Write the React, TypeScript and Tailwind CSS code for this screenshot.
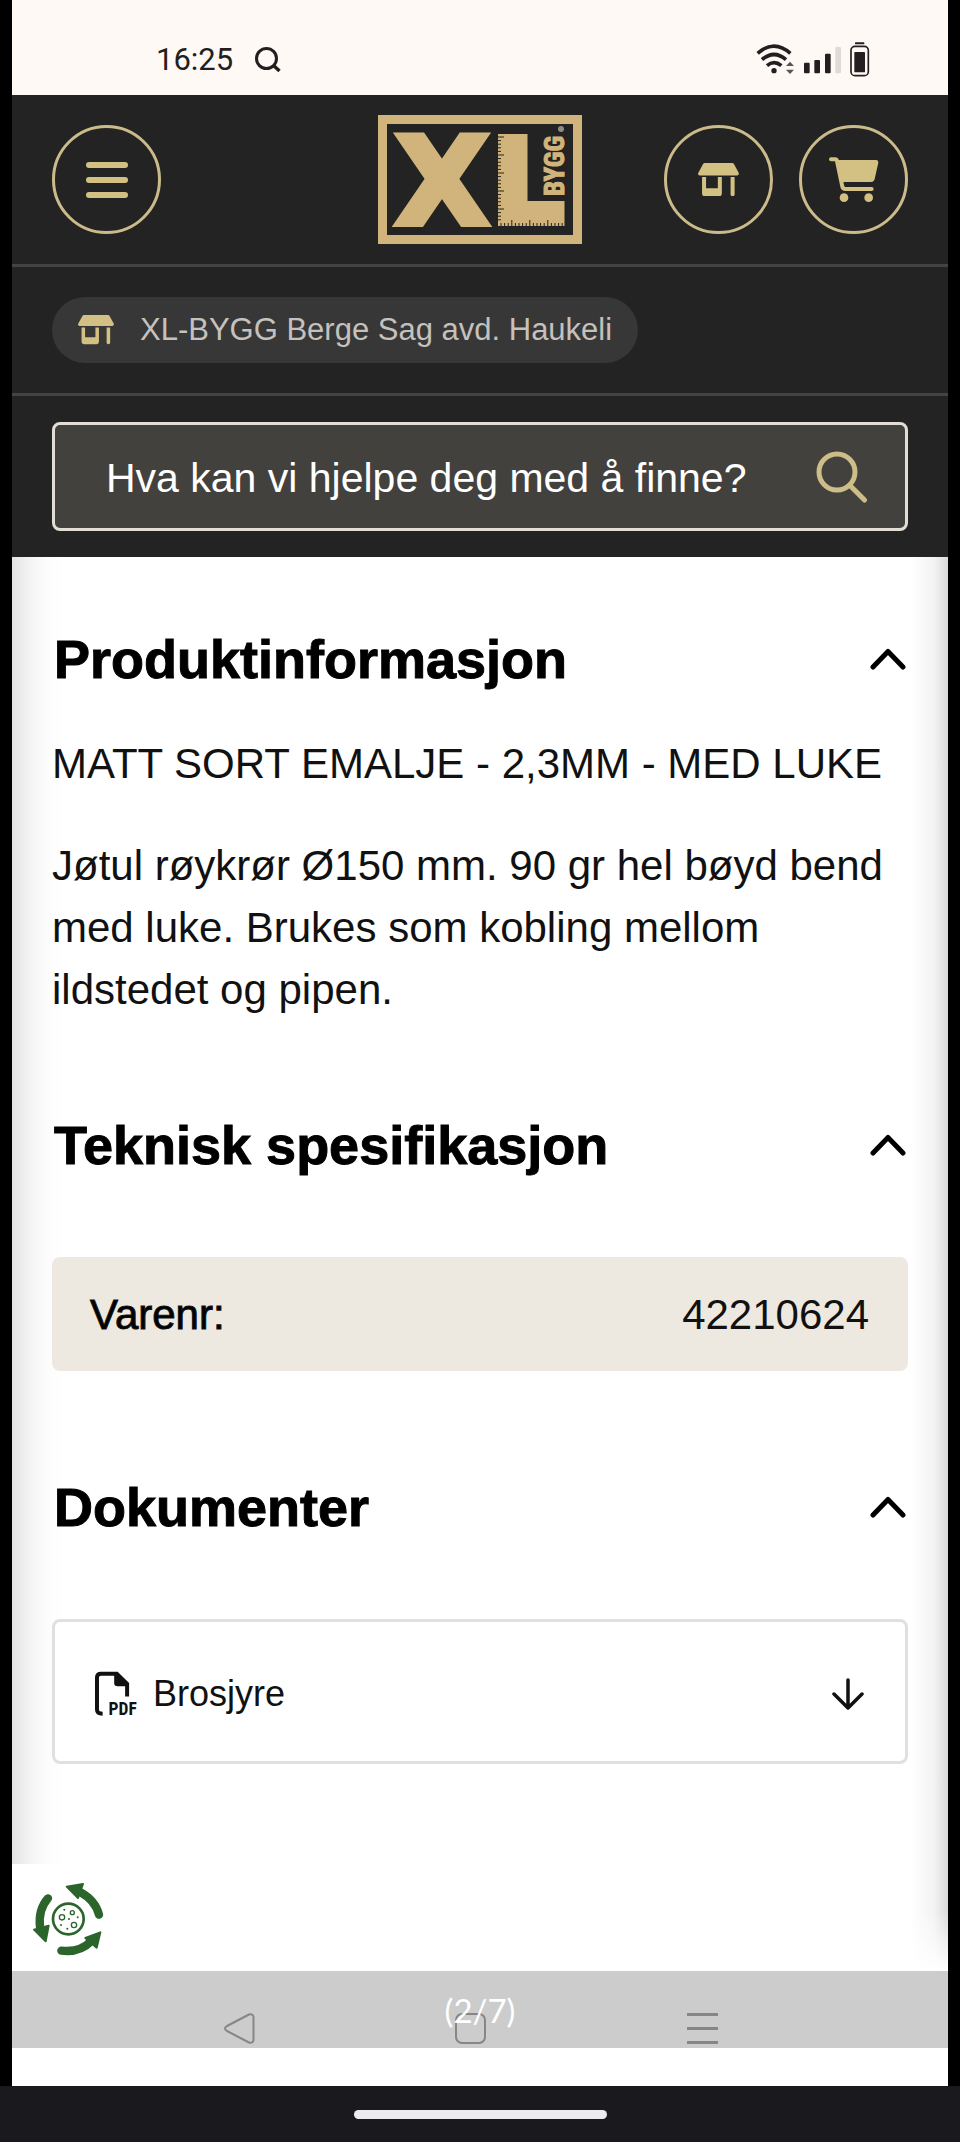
import { useState, type ReactNode } from "react";

function StoreIcon({ className }: { className: string }) {
  return (
    <svg viewBox="0 0 122 100" className={className} fill="currentColor" aria-hidden="true">
      <path d="M20 0H102Q105 0 107 3L121 29Q123 37 116 37H5Q-2 37 1 29L15 3Q17 0 20 0Z" />
      <path d="M12 42H24V75H59V42H71V91Q71 99 63 99H20Q12 99 12 91Z" />
      <path d="M97 42H109V93Q109 99 103 99T97 93Z" />
    </svg>
  );
}

function CartIcon() {
  return (
    <svg viewBox="0 0 150 136" className="w-[50px]" fill="currentColor" aria-hidden="true">
      <path
        d="M6 7H18Q23 7 24 12L40 89Q42 96 49 96H128"
        fill="none"
        stroke="currentColor"
        strokeWidth="12"
        strokeLinecap="round"
        strokeLinejoin="round"
      />
      <path d="M24 9H142Q149 10 148 17L137 66Q135 75 126 75H40Z" />
      <circle cx="45" cy="122" r="13" />
      <circle cx="119" cy="122" r="13" />
    </svg>
  );
}

function Logo() {
  const ticks = Array.from({ length: 24 }, (_, i) => i);
  return (
    <svg viewBox="0 0 204 129" className="w-[204px] overflow-visible text-[#d0b47b]" role="img" aria-label="XL-BYGG">
      <rect x="4.5" y="4.5" width="195" height="120" fill="none" stroke="currentColor" strokeWidth="9" />
      <text
        x="17"
        y="108.500"
        fontFamily="'DejaVu Sans'"
        fontWeight="700"
        fontSize="122"
        fill="currentColor"
        stroke="currentColor"
        strokeWidth="6"
      >
        X
      </text>
      <path d="M120 19H149.500V86H186.500V111H120Z" fill="currentColor" />
      <g stroke="#232323" strokeWidth="1">
        {ticks.map((i) => (
          <path key={i} d={`M119 ${22 + i * 3.6}h${i % 5 === 0 ? 7 : 4}`} />
        ))}
        {ticks.slice(0, 18).map((i) => (
          <path key={i} d={`M${123 + i * 3.6} 112v${i % 5 === 3 ? -7 : -4}`} />
        ))}
      </g>
      <text
        transform="translate(186 81) rotate(-90)"
        fontFamily="'Liberation Sans Narrow', 'Roboto Condensed', 'DejaVu Sans Condensed', sans-serif"
        fontWeight="700"
        fontSize="27"
        fill="currentColor"
        stroke="currentColor"
        strokeWidth="1"
      >
        BYGG
      </text>
      <circle cx="183" cy="14" r="3" fill="#8f8b86" />
    </svg>
  );
}

function PdfIcon() {
  return (
    <svg viewBox="28 26 136 138" className="w-[45px] overflow-visible" aria-hidden="true">
      <path
        d="M51 155Q34 155 34 143V46Q34 34 46 34H94L125 65V103"
        fill="none"
        stroke="currentColor"
        strokeWidth="12"
      />
      <path d="M86 32H96L129 64V72H96Q86 72 86 62Z" fill="currentColor" />
      <text
        x="69"
        y="160"
        fontFamily="'Liberation Sans Narrow', 'Roboto Condensed', sans-serif"
        fontWeight="700"
        fontSize="53"
        fill="currentColor"
      >
        PDF
      </text>
    </svg>
  );
}

function CookieIcon() {
  return (
    <svg viewBox="94 122 216 228" className="w-[72px]" fill="#2b652c" aria-hidden="true">
      <g fill="none" stroke="#2b652c" strokeWidth="25" strokeLinecap="round">
        <path d="M295 223Q284 180 240 156" />
        <path d="M142 174Q112 208 118 260" />
        <path d="M182 331Q238 338 274 300" />
      </g>
      <g stroke="#2b652c" strokeWidth="6" strokeLinejoin="round">
        <path d="M198 139L247 131L232 173Z" />
        <path d="M100 268L144 256L135 303Z" />
        <path d="M299 276L254 293L288 322Z" />
      </g>
      <circle cx="203" cy="236" r="46" fill="#fff" stroke="#2b652c" strokeWidth="8" />
      <g fill="none" stroke="#2b652c" strokeWidth="4">
        <circle cx="184" cy="231" r="8" />
        <circle cx="215" cy="217" r="6" />
        <circle cx="220" cy="254" r="8" />
      </g>
      <circle cx="191" cy="208" r="3" />
      <circle cx="231" cy="231" r="3" />
      <circle cx="205" cy="236" r="3" />
      <circle cx="181" cy="254" r="3" />
      <circle cx="200" cy="265" r="3" />
    </svg>
  );
}

function StatusBar() {
  return (
    <div className="flex h-[95px] items-center justify-between bg-[#fef9f5] pt-6 pr-[78px] pl-36 text-[#231f20]">
      <div className="flex items-center gap-[22px]">
        <span className="font-[Roboto] text-[31px] leading-none">16:25</span>
        <svg viewBox="0 0 26 26" className="w-[26px]" fill="none" stroke="currentColor" strokeWidth="3" aria-hidden="true">
          <circle cx="11.500" cy="11.500" r="10" />
          <path d="M18 18L24.500 24" strokeWidth="3.500" />
        </svg>
      </div>
      <svg viewBox="830 125 342 106" className="w-[114px]" fill="currentColor" aria-hidden="true">
        <g fill="none" stroke="currentColor" strokeWidth="11">
          <path d="M835 159Q884 116 933 159" />
          <path d="M848 178Q884 147 920 178" />
          <path d="M863 196Q884 178 906 196" />
        </g>
        <circle cx="884" cy="211" r="8" />
        <path d="M920 197L932 184L944 197ZM920 208L932 221L944 208Z" fill="#555" />
        <rect x="974" y="187" width="17" height="32" rx="3" />
        <rect x="1005" y="179" width="17" height="40" rx="3" />
        <rect x="1037" y="160" width="17" height="59" rx="3" />
        <rect x="1068" y="140" width="17" height="79" rx="3" fill="#dedad7" />
        <rect x="1115" y="138" width="52" height="88" rx="12" fill="none" stroke="currentColor" strokeWidth="5" />
        <rect x="1125" y="155" width="32" height="61" rx="2" />
        <rect x="1127" y="126" width="28" height="6" rx="2" />
      </svg>
    </div>
  );
}

const roundButton =
  "flex size-[109px] items-center justify-center rounded-full border-3 border-[#cbbb8a] text-[#d3c083]";

function Header() {
  return (
    <header className="bg-[#232323]">
      <div className="grid grid-cols-[1fr_auto_1fr] items-center border-b-3 border-[#434343] px-10 py-5">
        <button type="button" aria-label="Meny" className={roundButton}>
          <svg viewBox="0 0 42 36" className="w-[42px]" fill="currentColor" aria-hidden="true">
            <rect width="42" height="6" rx="3" />
            <rect y="15" width="42" height="6" rx="3" />
            <rect y="30" width="42" height="6" rx="3" />
          </svg>
        </button>
        <a href="#" aria-label="XL-BYGG">
          <Logo />
        </a>
        <div className="flex justify-end gap-[26px]">
          <button type="button" aria-label="Butikk" className={roundButton}>
            <StoreIcon className="w-[41px]" />
          </button>
          <button type="button" aria-label="Handlekurv" className={roundButton}>
            <CartIcon />
          </button>
        </div>
      </div>

      <div className="flex border-b-3 border-[#434343] px-10 py-[30px]">
        <a
          href="#"
          className="flex h-[66px] items-center gap-[26px] rounded-full bg-[#373737] px-[26px] text-[31px] text-[#c5c1bd]"
        >
          <StoreIcon className="w-[36px] text-[#d3c083]" />
          XL-BYGG Berge Sag avd. Haukeli
        </a>
      </div>

      <form role="search" onSubmit={(e) => e.preventDefault()} className="px-10 py-[26px]">
        <div className="flex h-[109px] items-center rounded-lg border-3 border-[#e2ddd5] bg-[#43413e] pl-[51px]">
          <input
            type="text"
            aria-label="Søk"
            placeholder="Hva kan vi hjelpe deg med å finne?"
            className="h-full min-w-0 flex-1 bg-transparent pt-1 text-[41px] text-white outline-none placeholder:text-white"
          />
          <button type="submit" aria-label="Søk" className="ml-7 flex w-[126px] justify-center text-[#cdbd88]">
            <svg viewBox="0 0 52 52" className="w-[52px]" fill="none" stroke="currentColor" strokeWidth="5" strokeLinecap="round" aria-hidden="true">
              <circle cx="21" cy="21" r="18" />
              <path d="M34 34.500L48.500 49" />
            </svg>
          </button>
        </div>
      </form>
    </header>
  );
}

function Section({ title, gap, children }: { title: string; gap: string; children: ReactNode }) {
  const [open, setOpen] = useState(true);
  return (
    <section>
      <h2>
        <button
          type="button"
          aria-expanded={open}
          onClick={() => setOpen(!open)}
          className="flex w-full items-center justify-between px-[2px] text-[54px] leading-[64px] font-bold [-webkit-text-stroke:1px_#000]"
        >
          {title}
          <svg viewBox="0 0 36 22" className="w-[36px]" fill="none" stroke="currentColor" strokeWidth="5" strokeLinecap="round" strokeLinejoin="round" aria-hidden="true">
            <path d="M3 19L18 3.500L33 19" />
          </svg>
        </button>
      </h2>
      {open && <div className={gap}>{children}</div>}
    </section>
  );
}

function NavBar() {
  return (
    <nav className="relative bg-[#cccccc] pt-[42px] pr-[130px] pb-1 pl-[112px] text-[#868686]">
      <div className="grid grid-cols-3 justify-items-center">
        <button type="button" aria-label="Tilbake">
          <svg viewBox="0 0 31 31" className="w-[31px]" fill="none" stroke="currentColor" strokeWidth="2" strokeLinejoin="round" aria-hidden="true">
            <path d="M3 13L25 1.500Q29 0.500 29.500 4V27Q29 30.500 25 29.500L3 18Q-1 15.500 3 13Z" />
          </svg>
        </button>
        <button type="button" aria-label="Hjem">
          <svg viewBox="0 0 31 31" className="w-[31px]" fill="none" stroke="currentColor" strokeWidth="2" aria-hidden="true">
            <rect x="1" y="1" width="29" height="29" rx="6" />
          </svg>
        </button>
        <button type="button" aria-label="Oversikt">
          <svg viewBox="0 0 31 31" className="w-[31px]" fill="none" stroke="currentColor" strokeWidth="3" aria-hidden="true">
            <path d="M0 1.500H31M0 15.500H31M0 29.500H31" />
          </svg>
        </button>
      </div>
      <p className="absolute inset-x-0 top-[21px] text-center font-[Lato] text-[33px] leading-[36px] text-white">(2/7)</p>
    </nav>
  );
}

export default function App() {
  return (
    <div className="bg-black font-['Liberation_Sans',Arial,sans-serif] text-black">
      <div className="mx-3 bg-white">
        <StatusBar />
        <Header />
        <main className="bg-[linear-gradient(to_left,#dadada,#f3f3f3_14px,#ffffff_38px)]">
          <div className="bg-[linear-gradient(to_right,#e4e4e4,#f4f4f4_18px,#fcfcfc_34px,#ffffff00_52px)] px-10 pt-[70px] pb-[100px]">
            <Section title="Produktinformasjon" gap="pt-[42px]">
              <div className="flex flex-col gap-10 text-[42px] leading-[62px] text-[#111]">
                <p className="whitespace-nowrap">MATT SORT EMALJE - 2,3MM - MED LUKE</p>
                <p>Jøtul røykrør Ø150 mm. 90 gr hel bøyd bend med luke. Brukes som kobling mellom ildstedet og pipen.</p>
              </div>
            </Section>
            <div className="h-[92px]" />
            <Section title="Teknisk spesifikasjon" gap="pt-20">
              <table className="w-full text-[42px]">
                <tbody>
                  <tr className="bg-[#ede9e0]">
                    <th scope="row" className="h-[114px] rounded-l-lg pl-[38px] text-left font-normal [-webkit-text-stroke:1px_#111]">
                      Varenr:
                    </th>
                    <td className="rounded-r-lg pr-[39px] text-right text-[#111]">42210624</td>
                  </tr>
                </tbody>
              </table>
            </Section>
            <div className="h-[104px]" />
            <Section title="Dokumenter" gap="pt-20">
              <a
                href="#"
                className="flex h-[145px] items-center rounded-lg border-3 border-[#e0e0e0] bg-white pt-1 pr-[41px] pl-10 text-[36px] text-[#111]"
              >
                <PdfIcon />
                <span className="ml-[13px] flex-1">Brosjyre</span>
                <svg viewBox="0 0 32 32" className="w-[32px]" fill="none" stroke="currentColor" strokeWidth="3.500" strokeLinecap="round" strokeLinejoin="round" aria-hidden="true">
                  <path d="M16 2V29M2 16L16 30L30 16" />
                </svg>
              </a>
            </Section>
          </div>
          <div className="bg-[linear-gradient(to_top,#ffffff,#ffffff00_60px)] px-5 pt-[17px] pb-[14px]">
            <button type="button" aria-label="Informasjonskapsler" className="block">
              <CookieIcon />
            </button>
          </div>
        </main>
        <NavBar />
        <div className="h-[38px]" />
      </div>
      <div className="flex h-14 items-center justify-center bg-[#1a191e]">
        <div className="h-[9px] w-[253px] rounded-full bg-[#ececee]" />
      </div>
    </div>
  );
}
